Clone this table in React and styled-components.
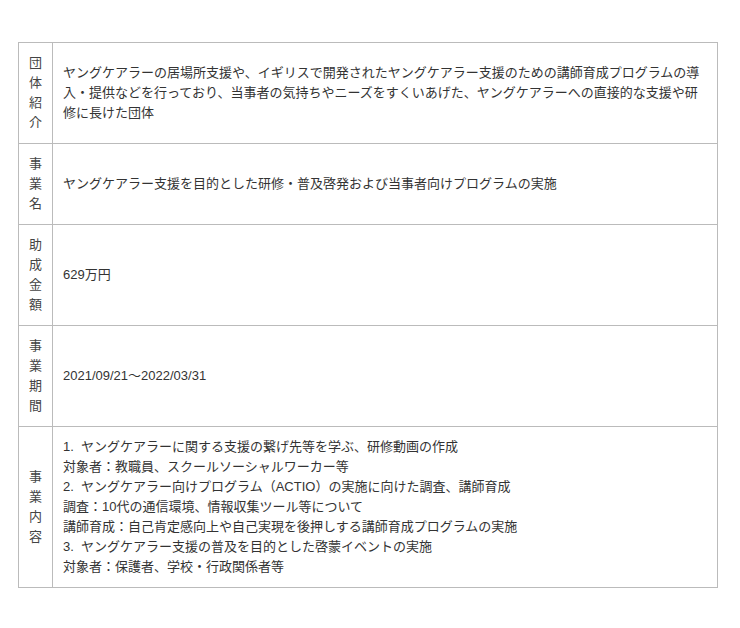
import React from 'react'
import styled, { createGlobalStyle } from 'styled-components'

const GlobalStyle = createGlobalStyle`
  body {
    margin: 0;
    background: #fff;
    font-family: "Liberation Sans", "Noto Sans CJK JP", sans-serif;
  }
`

const Page = styled.div`
  padding: 42px 0 0 18px;
`

const Table = styled.table`
  width: 700px;
  border-collapse: collapse;
  font-size: 13px;
  line-height: 20px;
  color: #333;
`

const Label = styled.th`
  width: 13px;
  padding: 10px;
  border: 1px solid #bbb;
  font-weight: normal;
  color: #444;
  text-align: center;
  vertical-align: middle;
  word-break: break-all;
`

const Content = styled.td`
  padding: 10px;
  border: 1px solid #bbb;
  text-align: left;
  vertical-align: middle;
`

const rows = [
  {
    label: '団体紹介',
    body: [
      'ヤングケアラーの居場所支援や、イギリスで開発されたヤングケアラー支援のための講師育成プログラムの導入・提供などを行っており、当事者の気持ちやニーズをすくいあげた、ヤングケアラーへの直接的な支援や研修に長けた団体',
    ],
  },
  { label: '事業名', body: ['ヤングケアラー支援を目的とした研修・普及啓発および当事者向けプログラムの実施'] },
  { label: '助成金額', body: ['629万円'] },
  { label: '事業期間', body: ['2021/09/21〜2022/03/31'] },
  {
    label: '事業内容',
    body: [
      '1.\u00a0 ヤングケアラーに関する支援の繋げ先等を学ぶ、研修動画の作成',
      '対象者：教職員、スクールソーシャルワーカー等',
      '2.\u00a0 ヤングケアラー向けプログラム（ACTIO）の実施に向けた調査、講師育成',
      '調査：10代の通信環境、情報収集ツール等について',
      '講師育成：自己肯定感向上や自己実現を後押しする講師育成プログラムの実施',
      '3.\u00a0 ヤングケアラー支援の普及を目的とした啓蒙イベントの実施',
      '対象者：保護者、学校・行政関係者等',
    ],
  },
]

export default function App() {
  return (
    <Page>
      <GlobalStyle />
      <Table>
        <tbody>
          {rows.map((r) => (
            <tr key={r.label}>
              <Label>{r.label}</Label>
              <Content>
                {r.body.map((line, i) => (
                  <React.Fragment key={i}>
                    {i > 0 && <br />}
                    {line}
                  </React.Fragment>
                ))}
              </Content>
            </tr>
          ))}
        </tbody>
      </Table>
    </Page>
  )
}
